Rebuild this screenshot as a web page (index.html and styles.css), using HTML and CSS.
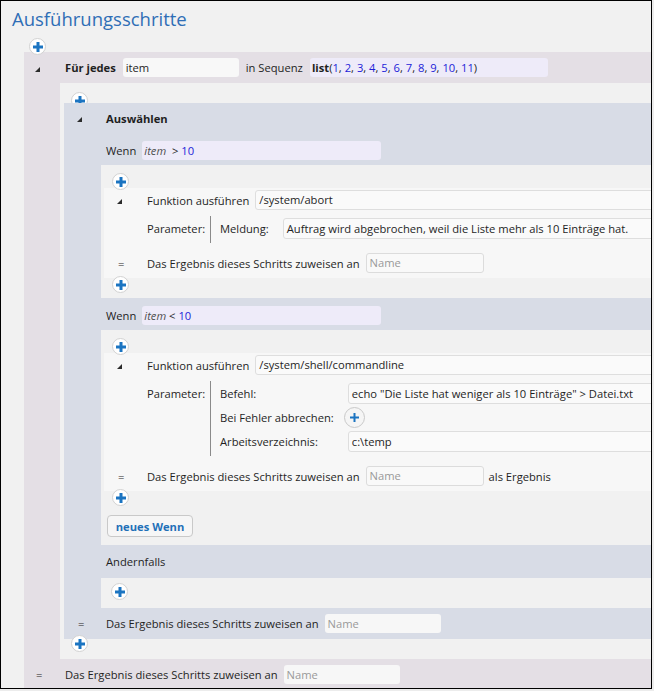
FILE: index.html
```html
<!DOCTYPE html>
<html lang="de">
<head>
    <meta charset="UTF-8">
    <title>Ausführungsschritte</title>
    <link rel="stylesheet" href="styles.css">
</head>
<body>
<div class="frame">
    <h1 class="title">Ausführungsschritte</h1>
    <div class="add-row top"><span class="add"><svg width="10" height="10"><path d="M3.5 0h3v10h-3z M0 3.5h10v3h-10z"/></svg></span></div>

    <div class="block loop">
        <div class="row">
            <span class="gut"><i class="tri"></i></span>
            <b>Für jedes</b>
            <span class="field var">item</span>
            <span class="sep">in Sequenz</span>
            <span class="expr seq"><b>list</b>(<em class="num">1</em>, <em class="num">2</em>, <em class="num">3</em>, <em class="num">4</em>, <em class="num">5</em>, <em class="num">6</em>, <em class="num">7</em>, <em class="num">8</em>, <em class="num">9</em>, <em class="num">10</em>, <em class="num">11</em>)</span>
        </div>

        <div class="body">
            <div class="add-row clip"><span class="add"><svg width="10" height="10"><path d="M3.5 0h3v10h-3z M0 3.5h10v3h-10z"/></svg></span></div>

            <div class="block choose">
                <div class="row head">
                    <span class="gut"><i class="tri"></i></span>
                    <b>Auswählen</b>
                </div>

                <div class="row cond">
                    <span class="gut"></span>
                    <span class="cond-label">Wenn</span>
                    <span class="expr test"><em class="var-ref">item</em>&nbsp; &gt; <span class="num">10</span></span>
                </div>
                <div class="branch">
                    <div class="add-row first"><span class="add"><svg width="10" height="10"><path d="M3.5 0h3v10h-3z M0 3.5h10v3h-10z"/></svg></span></div>
                    <div class="step">
                        <div class="row func">
                            <span class="gut"><i class="tri"></i></span>
                            <span>Funktion ausführen</span>
                            <span class="input fn">/system/abort</span>
                        </div>
                        <div class="params">
                            <span class="gut"></span>
                            <span class="plabel">Parameter:</span>
                            <div class="plist">
                                <span class="pname">Meldung:</span>
                                <span class="input">Auftrag wird abgebrochen, weil die Liste mehr als 10 Einträge hat.</span>
                            </div>
                        </div>
                        <div class="row assign">
                            <span class="gut"><span class="eq">=</span></span>
                            <span>Das Ergebnis dieses Schritts zuweisen an</span>
                            <span class="name boxed">Name</span>
                        </div>
                    </div>
                    <div class="add-row after"><span class="add"><svg width="10" height="10"><path d="M3.5 0h3v10h-3z M0 3.5h10v3h-10z"/></svg></span></div>
                </div>

                <div class="row cond">
                    <span class="gut"></span>
                    <span class="cond-label">Wenn</span>
                    <span class="expr test"><em class="var-ref">item</em> &lt; <span class="num">10</span></span>
                </div>
                <div class="branch">
                    <div class="add-row first"><span class="add"><svg width="10" height="10"><path d="M3.5 0h3v10h-3z M0 3.5h10v3h-10z"/></svg></span></div>
                    <div class="step">
                        <div class="row func">
                            <span class="gut"><i class="tri"></i></span>
                            <span>Funktion ausführen</span>
                            <span class="input fn">/system/shell/commandline</span>
                        </div>
                        <div class="params">
                            <span class="gut"></span>
                            <span class="plabel">Parameter:</span>
                            <div class="plist">
                                <span class="pname">Befehl:</span>
                                <span class="input">echo "Die Liste hat weniger als 10 Einträge" &gt; Datei.txt</span>
                                <span class="pname">Bei Fehler abbrechen:</span>
                                <span class="add small"><svg width="9" height="9"><path d="M3.5 0h2v9h-2z M0 3.5h9v2h-9z"/></svg></span>
                                <span class="pname">Arbeitsverzeichnis:</span>
                                <span class="input">c:\temp</span>
                            </div>
                        </div>
                        <div class="row assign">
                            <span class="gut"><span class="eq">=</span></span>
                            <span>Das Ergebnis dieses Schritts zuweisen an</span>
                            <span class="name boxed">Name</span>
                            <span class="suffix">als Ergebnis</span>
                        </div>
                    </div>
                    <div class="add-row after"><span class="add"><svg width="10" height="10"><path d="M3.5 0h3v10h-3z M0 3.5h10v3h-10z"/></svg></span></div>
                    <button class="btn">neues Wenn</button>
                </div>

                <div class="row otherwise">
                    <span class="gut"></span>
                    <span>Andernfalls</span>
                </div>
                <div class="branch else">
                    <div class="add-row"><span class="add"><svg width="10" height="10"><path d="M3.5 0h3v10h-3z M0 3.5h10v3h-10z"/></svg></span></div>
                </div>

                <div class="row">
                    <span class="gut"><span class="eq">=</span></span>
                    <span>Das Ergebnis dieses Schritts zuweisen an</span>
                    <span class="name">Name</span>
                </div>
            </div>

            <div class="add-row last"><span class="add"><svg width="10" height="10"><path d="M3.5 0h3v10h-3z M0 3.5h10v3h-10z"/></svg></span></div>
        </div>

        <div class="row">
            <span class="gut"><span class="eq">=</span></span>
            <span>Das Ergebnis dieses Schritts zuweisen an</span>
            <span class="name">Name</span>
        </div>
    </div>
</div>
</body>
</html>
```

FILE: styles.css
```css
body {
    margin: 0;
    background-color: #ececec;
    font-family: "Open Sans", Arial, sans-serif;
    font-size: 11.2px;
    color: #1f1f1f;
}

.frame {
    width: 650px;
    height: 687px;
    border: 1px solid #000;
    background-color: #f1f1f1;
    overflow: hidden;
}

.title {
    margin: 0;
    padding: 5px 0 0 11px;
    height: 26px;
    font-size: 18.5px;
    line-height: 26px;
    font-weight: normal;
    color: #2f6eb6;
}

/* round "+" buttons */
.add {
    display: inline-flex;
    align-items: center;
    justify-content: center;
    width: 17px;
    height: 17px;
    box-sizing: border-box;
    border: 1px solid #d2d2d2;
    border-radius: 50%;
    background-color: #fff;
    vertical-align: top;
}

.add svg {
    display: block;
    fill: #1b74c1;
}

.add.small {
    width: 21px;
    height: 21px;
    margin-left: -4px;
    border-color: #c9c9c9;
    background-color: #f5f5f5;
}

.add-row {
    box-sizing: border-box;
    height: 20px;
    padding-left: 11px;
}

.add-row.top {
    padding: 6px 0 0 28px;
}

.add-row.clip {
    padding-top: 9px;
    overflow: hidden;
}

.add-row.first {
    height: 23px;
    padding-top: 8px;
}

.add-row.after {
    margin-top: -2px;
}

.add-row.last .add {
    margin-top: -4px;
}

/* blocks */
.block.loop {
    margin-left: 23px;
    background-color: #e4dfe5;
}

.block.choose {
    margin-left: 4px;
    background-color: #d8dce6;
}

.body {
    margin-left: 36px;
    background-color: #f1f1f1;
}

.branch {
    margin-left: 37px;
    padding-bottom: 2px;
    background-color: #f1f1f1;
}

.branch.else {
    height: 30px;
    padding: 5px 0 0;
    box-sizing: border-box;
}

.branch.else .add-row {
    padding-left: 10px;
}

.step {
    margin-left: 3px;
    padding-bottom: 1px;
    background-color: #f7f7f7;
}

.row {
    display: flex;
    align-items: center;
    height: 31px;
    white-space: nowrap;
}

.gut {
    flex: none;
    align-self: stretch;
    display: flex;
    align-items: center;
    box-sizing: border-box;
}

.loop > .row > .gut {
    width: 41px;
    padding-left: 11px;
}

.choose > .row > .gut {
    width: 42px;
    padding-left: 13px;
}

.step .gut {
    width: 43px;
    padding-left: 13px;
}

.tri {
    width: 0;
    height: 0;
    margin-top: 3px;
    border-left: 5px solid transparent;
    border-bottom: 5px solid #2b2b2b;
}

.eq {
    margin-left: 1px;
}

.choose > .head {
    height: 30px;
}

.cond {
    height: 32px;
    padding-top: 8px;
    box-sizing: border-box;
    align-items: flex-start;
}

.cond-label {
    line-height: 19px;
}

.otherwise {
    height: 33px;
}

.func {
    height: 24px;
}

.assign {
    height: 28px;
    margin-top: 6px;
}

/* fields */
.field,
.expr,
.name {
    height: 19px;
    line-height: 19px;
    box-sizing: border-box;
    border-radius: 3px;
    padding: 0 3px;
}

.field {
    background-color: #f8f8f8;
}

.field.var {
    width: 116px;
    margin-left: 7px;
}

.sep {
    margin: 0 7px;
}

.expr {
    background-color: #eeebf9;
    padding: 0 2px;
}

.expr.seq {
    width: 238px;
}

.expr.test {
    width: 239px;
    margin-left: 6px;
}

.num {
    font-style: normal;
    color: #1d1dd8;
}

.var-ref {
    color: #505050;
}

.name {
    width: 116px;
    margin-left: 6px;
    background-color: #f7f7f7;
    color: #9a9a9a;
}

.name.boxed {
    width: 118px;
    height: 20px;
    line-height: 18px;
    border: 1px solid #dcdcdc;
    background-color: #f9f9f9;
}

.suffix {
    margin-left: 5px;
}

.input {
    display: block;
    height: 21px;
    line-height: 19px;
    box-sizing: border-box;
    padding: 0 3px;
    border: 1px solid #dedede;
    border-radius: 3px;
    background-color: #fafafa;
    margin-right: -10px;
    white-space: nowrap;
    overflow: hidden;
}

.input.fn {
    flex: 1;
    height: 20px;
    line-height: 18px;
    margin-left: 6px;
}

/* parameter table */
.params {
    display: flex;
    margin-top: 4px;
}

.params .gut {
    width: 43px;
}

.plabel {
    width: 63px;
    flex: none;
    padding-top: 2px;
    line-height: 21px;
}

.plist {
    flex: 1;
    display: grid;
    grid-template-columns: auto 1fr;
    column-gap: 14px;
    row-gap: 3px;
    align-items: start;
    padding: 2px 0 4px 9px;
    border-left: 1px solid #8a8a8a;
    white-space: nowrap;
}

.pname {
    line-height: 21px;
}

.btn {
    display: block;
    width: 86px;
    height: 22px;
    margin: 6px 0 6px 6px;
    padding: 0;
    border: 1px solid #c9c9c9;
    border-radius: 4px;
    background-color: #f6f6f6;
    font-family: "Open Sans", Arial, sans-serif;
    font-size: 11.2px;
    font-weight: bold;
    color: #1f70b8;
}
```
